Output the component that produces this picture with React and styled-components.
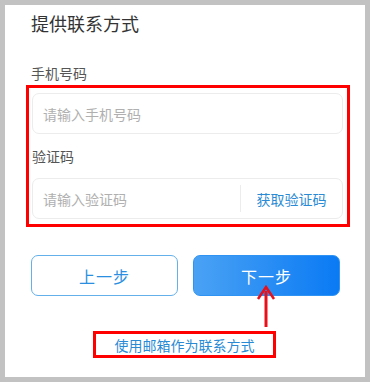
import React from 'react';
import styled, { createGlobalStyle } from 'styled-components';

const Global = createGlobalStyle`
  html, body { margin: 0; padding: 0; background: #c2c2c2; }
  body { font-family: "Noto Sans CJK SC", "Liberation Sans", sans-serif; }
`;

const Frame = styled.div`
  width: 370px;
  height: 382px;
  box-sizing: border-box;
  padding: 5px;
  background: #c2c2c2;
`;

const Panel = styled.div`
  position: relative;
  height: 100%;
  background: #fff;
  box-sizing: border-box;
  padding: 6px 0 0 26px;
  display: flex;
  flex-direction: column;
`;

const Title = styled.h1`
  margin: 0;
  font-size: 18px;
  font-weight: 400;
  line-height: 24px;
  color: #333;
`;

const Label = styled.div`
  font-size: 14px;
  line-height: 20px;
  color: #555;
  margin-top: ${p => p.$top || 0}px;
`;

const Highlight = styled.div`
  width: 324px;
  height: 142px;
  box-sizing: border-box;
  border: 3px solid #f00;
  margin: 2px 0 0 -5px;
  padding: 5px 0 0 3px;
  display: flex;
  flex-direction: column;
`;

const Field = styled.div`
  width: 311px;
  height: 41px;
  box-sizing: border-box;
  border: 1px solid #ececec;
  border-radius: 7px;
  display: flex;
  align-items: center;
  margin-top: ${p => p.$top || 0}px;
`;

const Input = styled.input`
  flex: 1;
  min-width: 0;
  border: none;
  outline: none;
  background: transparent;
  padding: 0 0 0 10px;
  font-family: inherit;
  font-size: 14px;
  color: #333;
  &::placeholder { color: #b0b0b0; }
`;

const CodeButton = styled.button`
  width: 102px;
  height: 27px;
  border: none;
  border-left: 1px solid #ececec;
  background: none;
  padding: 0;
  font-family: inherit;
  font-size: 14px;
  color: #2a8bd4;
`;

const Actions = styled.div`
  display: flex;
  gap: 15px;
  margin-top: 28px;
`;

const StepButton = styled.button`
  width: 147px;
  height: 41px;
  box-sizing: border-box;
  border-radius: 7px;
  font-family: inherit;
  font-size: 16px;
  letter-spacing: 1px;
  border: 1px solid ${p => (p.$primary ? '#2f93f3' : '#63b0ea')};
  background: ${p => (p.$primary ? 'linear-gradient(90deg, #4aa2f4, #0a7af4)' : '#fff')};
  color: ${p => (p.$primary ? '#fff' : '#2a8fe0')};
`;

const LinkBox = styled.div`
  align-self: flex-start;
  margin: 35px 0 0 62px;
  width: 183px;
  height: 27px;
  box-sizing: border-box;
  border: 3px solid #f00;
  display: flex;
  align-items: center;
  justify-content: center;
  font-size: 14px;
  color: #2a8bd4;
`;

const Arrow = styled.svg`
  position: absolute;
  left: 251px;
  top: 280px;
`;

export default function App() {
  return (
    <Frame>
      <Global />
      <Panel>
        <Title>提供联系方式</Title>
        <Label $top={28}>手机号码</Label>
        <Highlight>
          <Field>
            <Input placeholder="请输入手机号码" />
          </Field>
          <Label $top={12}>验证码</Label>
          <Field $top={12}>
            <Input placeholder="请输入验证码" />
            <CodeButton>获取验证码</CodeButton>
          </Field>
        </Highlight>
        <Actions>
          <StepButton>上一步</StepButton>
          <StepButton $primary>下一步</StepButton>
        </Actions>
        <LinkBox>使用邮箱作为联系方式</LinkBox>
        <Arrow width="20" height="42" viewBox="0 0 20 42">
          <path d="M10 42 L10 6" stroke="#e8101a" strokeWidth="3" />
          <path d="M2 14 L10 2 L18 14" stroke="#e8101a" strokeWidth="2.5" fill="none" />
        </Arrow>
      </Panel>
    </Frame>
  );
}
